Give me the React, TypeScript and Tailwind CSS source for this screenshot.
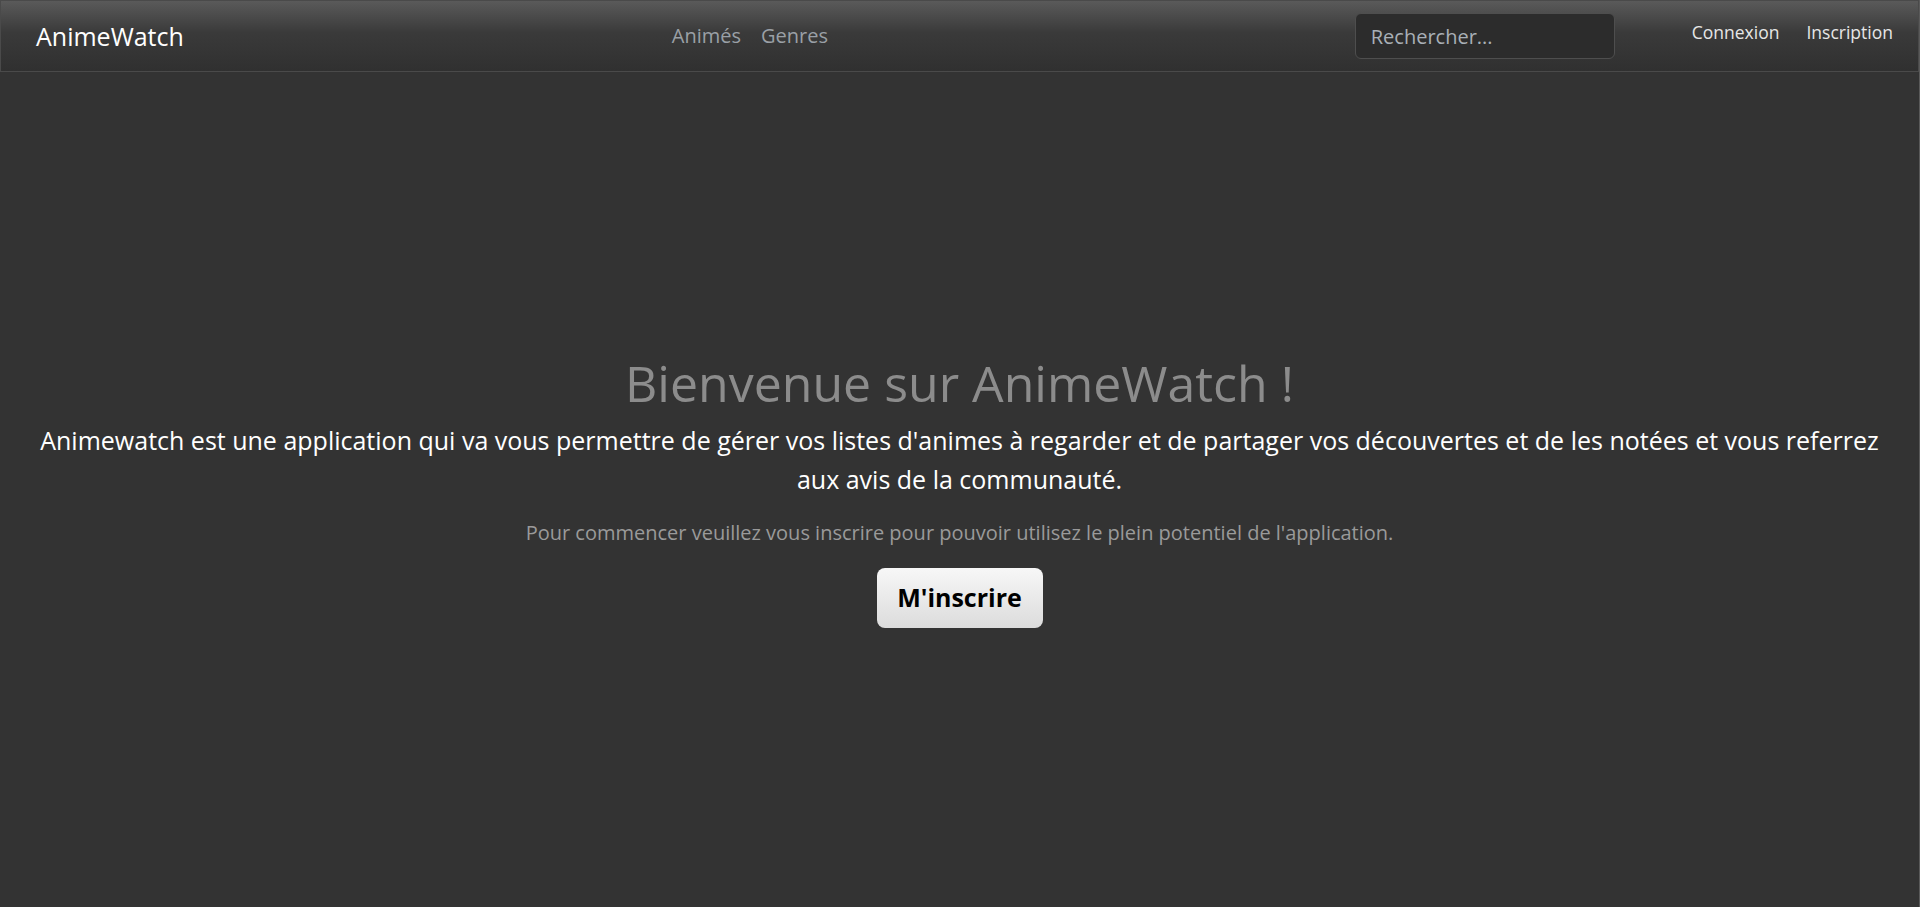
import React from "react";

const font = { fontFamily: '"Open Sans", "Noto Sans", sans-serif' };

const Navbar: React.FC = () => (
  <nav className="flex h-[72px] items-center border border-[#4a4a4a] bg-[linear-gradient(to_bottom,#5a5a5a_0%,#3a3a3a_45%,#303030_100%)] pl-[35px] pr-[25px]">
    <a className="text-[25px] leading-none text-white" href="#">
      AnimeWatch
    </a>
    <div className="ml-[488px] flex items-center gap-[20px] text-[20px] text-[#9aa0a6]">
      <a href="#">Animés</a>
      <a href="#">Genres</a>
    </div>
    <div className="ml-auto flex items-center">
      <input
        className="h-[46px] w-[260px] rounded-[6px] border border-[#4e4e4e] bg-[#2c2c2c] px-[15px] text-[20px] text-white placeholder:text-[#a9b0b7] outline-none"
        placeholder="Rechercher..."
      />
      <div className="mb-[8px] ml-[77px] flex items-center gap-[27px] text-[17.5px] text-[#e6e6e6]">
        <a href="#">Connexion</a>
        <a href="#">Inscription</a>
      </div>
    </div>
  </nav>
);

export default function App() {
  return (
    <div className="flex min-h-[907px] flex-col border-r border-[#5a5a5a] bg-[#333333]" style={font}>
      <Navbar />
      {/* Welcome section */}
      <main className="flex flex-1 flex-col items-center justify-center px-[38px] pt-[6px] pb-[4px] text-center">
        <h1 className="text-[50px] font-normal leading-[1.2] text-[#8c8c8c]">
          Bienvenue sur AnimeWatch !
        </h1>
        <p className="mt-[8px] text-[25px] leading-[39px] text-white">
          Animewatch est une application qui va vous permettre de gérer vos listes d'animes à regarder et de
          partager vos découvertes et de les notées et vous referrez aux avis de la communauté.
        </p>
        <p className="mt-[19px] text-[20px] text-[#9a9a9a]">
          Pour commencer veuillez vous inscrire pour pouvoir utilisez le plein potentiel de l'application.
        </p>
        <button className="mt-[20px] h-[60px] w-[166px] rounded-[8px] bg-[linear-gradient(to_bottom,#f7f7f7,#dcdcdc)] text-[25px] font-bold text-black">
          M'inscrire
        </button>
      </main>
    </div>
  );
}
